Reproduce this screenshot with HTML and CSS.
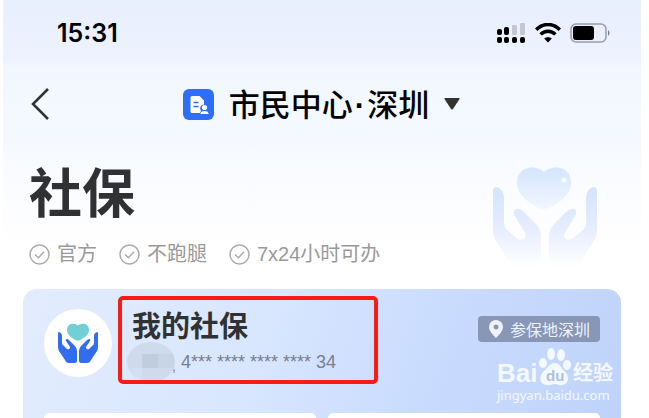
FILE: index.html
```html
<!DOCTYPE html>
<html lang="zh-CN">
<head>
    <meta charset="UTF-8">
    <meta name="viewport" content="width=device-width, initial-scale=1.0">
    <title>社保</title>
    <link rel="stylesheet" href="styles.css">
</head>
<body>
    <svg class="symbols">
        <symbol id="check-icon" viewBox="0 0 21 21">
            <circle cx="10.500" cy="10.500" r="9.500"/>
            <path d="M6 10.500l3.500 3.200 5.500-6"/>
        </symbol>
        <symbol id="heart" viewBox="0 0 54 42">
            <path d="M27 5C36-3 54-1 54 16c0 12-13 21-22 25q-5 2-10 0C13 37 0 28 0 16 0-1 18-3 27 5z"/>
        </symbol>
        <symbol id="hand" viewBox="0 0 48 84">
            <path d="M0 4Q0 0 4 0Q11 3 11 11V36Q11 40 14 43L25 52Q29 54 32 51Q34 48 31 44L22 29Q19 23 23 22Q26 21 31 25L42 36Q48 42 48 49V84H28Q21 84 17 76L3 54Q0 49 0 44z"/>
        </symbol>
    </svg>
    <div id="app">
        <header class="status-bar">
            <span class="time">15:31</span>
            <div class="status-icons">
                <svg width="30" height="21" viewBox="0 0 30 21">
                    <g fill="#000">
                        <rect x="1" y="6" width="5" height="6" rx="2"/>
                        <rect x="8" y="4" width="5" height="8" rx="2"/>
                        <rect x="1" y="14" width="5" height="6" rx="2"/>
                        <rect x="8" y="14" width="5" height="6" rx="2"/>
                        <rect x="16" y="14" width="5" height="6" rx="2"/>
                        <rect x="24" y="14" width="5" height="6" rx="2"/>
                    </g>
                    <g fill="#c3c7d2">
                        <rect x="16" y="2" width="5" height="10" rx="1"/>
                        <rect x="24" y="0" width="5" height="12" rx="1"/>
                    </g>
                </svg>
                <svg width="26" height="20" viewBox="0 0 26 20" fill="none" stroke="#000" stroke-width="3.400">
                    <path d="M1.200 6.700C8-.3 18-.3 24.800 6.700"/>
                    <path d="M5.600 11.400c4.300-4.200 10.500-4.200 14.800 0"/>
                    <path d="M13 19.500l-3.800-3.900q3.800-3.200 7.600 0z" fill="#000" stroke="none"/>
                </svg>
                <svg width="41" height="20" viewBox="0 0 41 20">
                    <rect x="1" y="1" width="35" height="18" rx="5" fill="none" stroke="#999ca6" stroke-width="1.500"/>
                    <rect x="3" y="3" width="21" height="14" rx="3" fill="#000"/>
                    <path d="M38 7q3 3 0 6z" fill="#777a83"/>
                </svg>
            </div>
        </header>
        <nav class="nav-bar">
            <button class="back" aria-label="返回">
                <svg width="20" height="32" viewBox="0 0 20 32" fill="none" stroke="#303133" stroke-width="2.500">
                    <path d="M18 1L3 16l15 15"/>
                </svg>
            </button>
            <button class="city">
                <svg width="31" height="31" viewBox="0 0 31 31">
                    <rect width="31" height="31" rx="6" fill="#2d6ff7"/>
                    <path d="M9 7h7.500l4.500 4.500v4a4 4 0 0 0-3 6.500l-1 2H9q-1.500 0-1.500-1.500v-14Q7.500 7 9 7z" fill="#fff"/>
                    <path d="M10.500 13.500h5M10.500 17.500h5" stroke="#2d6ff7" stroke-width="1.500"/>
                    <circle cx="21.500" cy="18.500" r="2.600" fill="#fff"/>
                    <path d="M17.500 25q0-3 4-3t4 3z" fill="#fff"/>
                </svg>
                <span>市民中心<span class="dot">·</span>深圳</span>
                <svg width="16" height="12" viewBox="0 0 16 12" fill="#333"><path d="M1 0h14q1 0 .5 1L9 11q-1 1-2 0L.5 1Q0 0 1 0z"/></svg>
            </button>
        </nav>
        <main>
            <section class="hero">
                <div>
                    <h1>社保</h1>
                    <ul class="features">
                        <li><svg class="check"><use href="#check-icon"/></svg>官方</li>
                        <li><svg class="check"><use href="#check-icon"/></svg>不跑腿</li>
                        <li><svg class="check"><use href="#check-icon"/></svg>7x24小时可办</li>
                    </ul>
                </div>
                <svg class="hero-art" width="104" height="106" viewBox="0 0 104 106">
                    <defs>
                        <linearGradient id="fade" x1="0" y1="0" x2="0" y2="1">
                            <stop offset="0" stop-color="#d3e4fd"/>
                            <stop offset="0.5" stop-color="#e6edfe"/>
                            <stop offset="0.95" stop-color="#fff"/>
                        </linearGradient>
                        <linearGradient id="fade-heart" x1="0" y1="0" x2="0" y2="1">
                            <stop offset="0" stop-color="#d3e4fd"/>
                            <stop offset="1" stop-color="#f3f7ff"/>
                        </linearGradient>
                    </defs>
                    <use href="#heart" x="24" y="0" width="54" height="42" fill="url(#fade-heart)"/>
                    <circle cx="71" cy="13" r="2.500" fill="#f8fbff"/>
                    <use href="#hand" x="0" y="20" width="48" height="84" fill="url(#fade)"/>
                    <use href="#hand" x="0" y="20" width="48" height="84" fill="url(#fade)" transform="translate(104 0) scale(-1 1)"/>
                </svg>
            </section>
            <section class="card">
                <div class="account">
                    <div class="logo">
                        <svg width="40" height="40" viewBox="0 0 40 40">
                            <use href="#heart" x="9" y="0" width="22" height="18" fill="#70d0d5"/>
                            <g fill="#326df0">
                                <path id="small-hand" d="M0 10q0-1 1-1 3 1 3 4v7q0 2 2 3l3 3q2 1 3-1v-1l-4-6q-1-2 1-2 1 0 3 2l5 5q2 2 2 5v10q0 2-2 2H11q-3 0-4-3L1 28q-1-2-1-4z"/>
                                <use href="#small-hand" transform="translate(40 0) scale(-1 1)"/>
                            </g>
                        </svg>
                    </div>
                    <div class="owner">
                        <h2>我的社保</h2>
                        <p><svg class="mosaic" width="48" height="40" viewBox="0 0 48 40">
                            <clipPath id="blob"><ellipse cx="24" cy="20" rx="24" ry="20"/></clipPath>
                            <g clip-path="url(#blob)">
                                <path fill="#cfdbec" d="M0 0h48v40H0z"/>
                                <path fill="#c7d5e6" d="M15 12h32v14H15z"/>
                                <path fill="#bfcddf" d="M15 12h16v14H15z"/>
                                <path fill="#d3e0f4" d="M0 26h15v14H0z"/>
                            </g>
                        </svg><span class="comma">,</span> 4*** **** **** **** 34</p>
                    </div>
                    <button class="place">
                        <svg width="14" height="18" viewBox="0 0 14 18" fill="#edf3ff"><path fill-rule="evenodd" d="M7 0a7 7 0 0 0-7 7c0 4 4 8 7 11 3-3 7-7 7-11a7 7 0 0 0-7-7zm0 4.500a2.500 2.500 0 1 1 0 5 2.500 2.500 0 0 1 0-5z"/></svg>
                        参保地深圳
                    </button>
                    <div class="highlight"></div>
                </div>
                <div class="tiles">
                    <div class="tile"></div>
                    <div class="tile"></div>
                </div>
                <div class="watermark">
                    <div class="brand">
                        <span class="bai">Bai</span>
                        <span class="paw">
                            <svg width="32" height="38" viewBox="0 0 32 38" fill="#f4f8ff">
                                <ellipse cx="4" cy="15" rx="4" ry="5"/>
                                <ellipse cx="12" cy="6" rx="4" ry="6"/>
                                <ellipse cx="22" cy="7" rx="4" ry="6"/>
                                <ellipse cx="28" cy="17" rx="4" ry="5"/>
                                <path d="M16 15c5 0 6 5 10 9 4 3 5 12-3 13-3 1-4-1-7-1s-5 2-9 1c-7-1-7-9-3-13 4-3 6-9 12-9z"/>
                            </svg>
                            <span class="du">du</span>
                        </span>
                        <span class="jingyan">经验</span>
                    </div>
                    <div class="site">jingyan.baidu.com</div>
                </div>
            </section>
        </main>
    </div>
</body>
</html>
```

FILE: styles.css
```css
* {
    box-sizing: border-box;
}
body {
    margin: 0;
    background-color: #fff;
    font-family: "Liberation Sans", "Noto Sans CJK SC", sans-serif;
    color: #303133;
}
h1, h2, p, ul {
    margin: 0;
    padding: 0;
}
svg {
    display: block;
    flex-shrink: 0;
}
button {
    background: none;
    border: none;
    padding: 0;
    font-family: inherit;
    color: inherit;
    cursor: pointer;
}
.symbols {
    position: absolute;
    width: 0;
    height: 0;
}
#app {
    display: flex;
    flex-direction: column;
    min-height: 100vh;
    margin: 0 8px 0 3px;
    background: linear-gradient(#e8effd 0, #edf2fe 60px, #f2f7ff 68px, #f5f9ff 140px, #fbfcff 190px, #fff 250px);
}
.status-bar {
    display: flex;
    justify-content: space-between;
    align-items: center;
    height: 66px;
    padding: 0 30px 0 54px;
}
.time {
    font-family: Inter, sans-serif;
    font-size: 25px;
    font-weight: 600;
    color: #000;
}
.status-icons {
    display: flex;
    align-items: center;
    gap: 9px;
}
.nav-bar {
    display: flex;
    align-items: center;
    height: 76px;
    padding: 0 27px;
}
.city {
    display: flex;
    align-items: center;
    justify-content: center;
    gap: 15px;
    flex-grow: 1;
    padding-right: 21px;
    font-family: "Noto Sans CJK SC", sans-serif;
    font-size: 31px;
    line-height: 40px;
    font-weight: 500;
    color: #000;
}
.dot {
    font-family: "Liberation Sans", sans-serif;
    font-weight: 700;
    padding: 0 2px;
}
main {
    display: flex;
    flex-direction: column;
    flex-grow: 1;
}
.hero {
    display: flex;
    justify-content: space-between;
    padding: 22px 44px 0 26px;
}
h1 {
    font-size: 53px;
    line-height: 62px;
    font-weight: 700;
}
.features {
    display: flex;
    gap: 22px;
    margin-top: 16px;
    list-style: none;
    font-size: 20px;
    line-height: 24px;
    color: #999;
}
.features li {
    display: flex;
    align-items: center;
    gap: 7px;
}
.check {
    width: 21px;
    height: 21px;
    fill: none;
    stroke: #aaa;
    stroke-width: 1.5px;
}
.hero-art {
    margin-top: 3px;
}
.card {
    position: relative;
    display: flex;
    flex-direction: column;
    flex-grow: 1;
    margin: 16px 20px 0;
    padding: 20px 21px 0;
    border-radius: 14px 14px 0 0;
    background: linear-gradient(110deg, #e3ecfe, #d8e6fe 40%, #c8dbfe 70%, #bfd2f9);
}
.account {
    position: relative;
    display: flex;
    align-items: flex-start;
}
.logo {
    display: flex;
    align-items: center;
    justify-content: center;
    width: 68px;
    height: 68px;
    border-radius: 50%;
    background-color: #fff;
}
.owner {
    flex-grow: 1;
    padding-left: 20px;
}
h2 {
    font-size: 29px;
    line-height: 36px;
    font-weight: 700;
}
.owner p {
    display: flex;
    align-items: center;
    gap: 5px;
    height: 34px;
    font-size: 18px;
    color: #777f8f;
}
.mosaic {
    margin: 0 -8px 0 -5px;
}
.comma {
    font-size: 14px;
    padding-top: 8px;
}
.place {
    display: flex;
    align-items: center;
    gap: 7px;
    height: 26px;
    margin-top: 7px;
    padding: 0 10px 0 11px;
    border-radius: 4px;
    background-color: #8797b5;
    font-size: 16px;
    color: #edf3ff;
}
.highlight {
    position: absolute;
    left: 74px;
    top: -13px;
    width: 260px;
    height: 88px;
    border: 4px solid #fb1b14;
    border-radius: 5px;
}
.tiles {
    display: grid;
    grid-template-columns: 1fr 1fr;
    gap: 12px;
    flex-grow: 1;
    margin-top: 34px;
}
.tile {
    border-radius: 8px 8px 0 0;
    background-color: #fff;
}
.watermark {
    position: absolute;
    right: 8px;
    top: 59px;
    width: 116px;
    color: #f4f8ff;
}
.brand {
    display: flex;
    align-items: flex-end;
    justify-content: space-between;
    height: 38px;
}
.bai {
    font-size: 26px;
    line-height: 26px;
    height: 26px;
    font-weight: 700;
}
.paw {
    position: relative;
}
.du {
    position: absolute;
    left: 0;
    right: 0;
    bottom: 2px;
    text-align: center;
    font-size: 15px;
    line-height: 16px;
    font-weight: 700;
    color: #aebfe3;
}
.jingyan {
    font-size: 20px;
    line-height: 26px;
    font-weight: 700;
}
.site {
    font-family: "Noto Sans", sans-serif;
    font-size: 13px;
    line-height: 18px;
}
```
